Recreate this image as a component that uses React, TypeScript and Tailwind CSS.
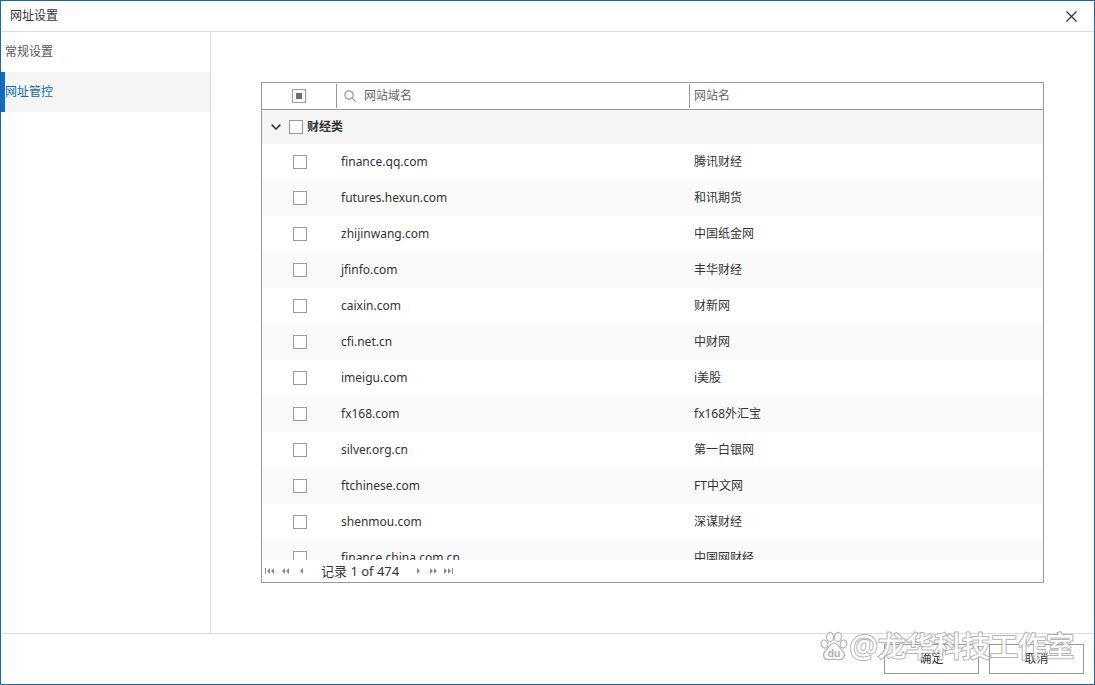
import { useState } from 'react'
import type { ComponentProps } from 'react'
import { clsx } from 'clsx'

interface Site {
  domain: string
  name:   string
}

const MENU = ['常规设置', '网址管控']

const SITES: Site[] = [
  { domain: 'finance.qq.com',       name: '腾讯财经' },
  { domain: 'futures.hexun.com',    name: '和讯期货' },
  { domain: 'zhijinwang.com',       name: '中国纸金网' },
  { domain: 'jfinfo.com',           name: '丰华财经' },
  { domain: 'caixin.com',           name: '财新网' },
  { domain: 'cfi.net.cn',           name: '中财网' },
  { domain: 'imeigu.com',           name: 'i美股' },
  { domain: 'fx168.com',            name: 'fx168外汇宝' },
  { domain: 'silver.org.cn',        name: '第一白银网' },
  { domain: 'ftchinese.com',        name: 'FT中文网' },
  { domain: 'shenmou.com',          name: '深谋财经' },
  { domain: 'finance.china.com.cn', name: '中国网财经' },
]

// Triangles and end bars of the record navigator
const ARROWS = {
  first:    'M0 0h1v6H0zM5 0v6L2 3zM9 0v6L6 3z',
  prevPage: 'M3 0v6L0 3zM7 0v6L4 3z',
  prev:     'M3 0v6L0 3z',
  next:     'M0 0v6l3-3z',
  nextPage: 'M0 0v6l3-3zM4 0v6l3-3z',
  last:     'M0 0v6l3-3zM4 0v6l3-3zM8 0h1v6H8z',
}

function PagerButton({ label, arrow }: { label: string; arrow: keyof typeof ARROWS }) {
  return (
    <button type="button" aria-label={label} className="flex h-4 w-[15px] items-center justify-center">
      <svg
        className={clsx(
          'h-[6px] fill-[#888888]',
          (arrow === 'first' || arrow === 'last') && 'w-[9px]',
          (arrow === 'prevPage' || arrow === 'nextPage') && 'w-[7px]',
          (arrow === 'prev' || arrow === 'next') && 'w-[3px]',
        )}
      >
        <path d={ARROWS[arrow]} />
      </svg>
    </button>
  )
}

function Checkbox({ mixed = false, ...props }: ComponentProps<'input'> & { mixed?: boolean }) {
  return (
    <input
      type="checkbox"
      ref={(el) => {
        if (el) el.indeterminate = mixed
      }}
      className="block h-[14px] w-[14px] shrink-0 appearance-none border border-[#999999] bg-white shadow-[inset_0_0_0_3px_#ffffff] checked:bg-[#6e6e6e] indeterminate:bg-[#6e6e6e]"
      {...props}
    />
  )
}

function Watermark() {
  return (
    <div className="pointer-events-none absolute right-5 bottom-5 flex items-center gap-px opacity-80">
      <svg viewBox="0 0 28 30" className="h-[30px] w-7 fill-white stroke-[#a0a0a0]" strokeWidth="1.200">
        <path d="M14 12c-4 0-4.500 4-7.500 6.500-3 2.500-3.500 5-2.500 7.500 1 2.500 3.500 3 6 2.500 2.500-.5 5.500-.5 8 0 2.500.5 5 0 6-2.500 1-2.500 0-5-2.500-7.500C18.500 16 18 12 14 12z" />
        <ellipse cx="4.500" cy="13" rx="3.300" ry="4" transform="rotate(-18 4.500 13)" />
        <ellipse cx="10" cy="6" rx="3.500" ry="4.600" />
        <ellipse cx="18" cy="6" rx="3.500" ry="4.600" transform="rotate(10 18 6)" />
        <ellipse cx="23.500" cy="13" rx="3.300" ry="4" transform="rotate(14 23.500 13)" />
        <text x="14" y="26" textAnchor="middle" className="fill-[#a0a0a0] stroke-none font-['Roboto',sans-serif] text-[11px] font-bold">
          du
        </text>
      </svg>
      <div className="flex items-center leading-9 font-medium text-white [-webkit-text-stroke:2px_#a0a0a0] [paint-order:stroke_fill]">
        <span className="text-[32px]">@</span>
        <span className="text-[28px]">龙华科技工作室</span>
      </div>
    </div>
  )
}

export default function App() {
  const [active, setActive] = useState('网址管控')
  const [open, setOpen] = useState(true)

  return (
    <div className="relative flex h-screen flex-col border border-[#1c66a8] bg-white font-['Noto_Sans','Noto_Sans_CJK_SC',sans-serif] text-[12px] leading-4 text-[#333333]">
      <header className="flex h-[31px] shrink-0 items-center justify-between border-b border-[#dcdcdc] pr-4 pl-[9px]">
        <h1>网址设置</h1>
        <button type="button" aria-label="关闭" className="flex h-[14px] w-[14px] items-center justify-center">
          <svg viewBox="0 0 11 11" className="h-[11px] w-[11px] stroke-[#333333]" strokeWidth="1.300">
            <path d="M.5.5l10 10M10.500.5l-10 10" />
          </svg>
        </button>
      </header>

      <div className="flex min-h-0 flex-1">
        <nav className="w-[210px] shrink-0 border-r border-[#dcdcdc]">
          {MENU.map((item) => (
            <button
              key={item}
              type="button"
              onClick={() => setActive(item)}
              className={clsx(
                'flex h-10 w-full items-center border-l-4 text-left',
                item === active
                  ? 'border-[#0a6ecb] bg-[#f5f5f5] text-[#0f6cb0]'
                  : 'border-transparent text-[#555555]',
              )}
            >
              {item}
            </button>
          ))}
        </nav>

        <main className="min-w-0 flex-1 p-[50px]">
          <div className="flex h-full flex-col border border-[#999999]">
            <div className="min-h-0 flex-1 overflow-hidden">
              <table className="w-full table-fixed border-separate border-spacing-0 text-left">
                <colgroup>
                  <col className="w-[74px]" />
                  <col className="w-[353px]" />
                  <col />
                </colgroup>
                <thead className="text-[#666666]">
                  <tr className="h-[27px]">
                    <th className="border-b border-[#999999] p-0 font-normal">
                      <div className="pl-[30px]">
                        <Checkbox mixed aria-label="全选" />
                      </div>
                    </th>
                    <th className="border-b border-[#999999] p-0 font-normal">
                      <label className="flex h-6 items-center gap-2 border-l border-[#999999] pl-[7px]">
                        <svg viewBox="0 0 12 12" className="h-3 w-3 shrink-0 fill-none stroke-[#999999]" strokeWidth="1.200">
                          <circle cx="5" cy="5" r="4.200" />
                          <path d="M8.200 8.200l3.500 3.500" />
                        </svg>
                        <input
                          type="text"
                          aria-label="网站域名"
                          placeholder="网站域名"
                          className="min-w-0 flex-1 outline-none placeholder:text-[#666666]"
                        />
                      </label>
                    </th>
                    <th className="border-b border-[#999999] p-0 font-normal">
                      <div className="flex h-6 items-center border-l border-[#999999] pl-1">网站名</div>
                    </th>
                  </tr>
                </thead>
                <tbody>
                  <tr className="h-[34px] bg-[#f5f5f5]">
                    <td colSpan={3} className="p-0">
                      <div className="flex items-center pl-[9px]">
                        <button
                          type="button"
                          aria-label="展开或收起"
                          aria-expanded={open}
                          onClick={() => setOpen(!open)}
                          className="mr-2 flex h-[10px] w-[10px] items-center"
                        >
                          <svg viewBox="0 0 10 6" className="h-[6px] w-[10px] fill-none stroke-[#333333]" strokeWidth="1.500">
                            <path d="M.6.6L5 5 9.400.6" />
                          </svg>
                        </button>
                        <label className="flex items-center gap-1 font-bold">
                          <Checkbox />
                          财经类
                        </label>
                      </div>
                    </td>
                  </tr>
                  {open &&
                    SITES.map(({ domain, name }) => (
                      <tr key={domain} className="h-9 even:bg-white odd:bg-[#fafafa]">
                        <td className="p-0">
                          <div className="pl-[31px]">
                            <Checkbox aria-label={domain} />
                          </div>
                        </td>
                        <td className="p-0 pl-[5px]">{domain}</td>
                        <td className="p-0 pl-[5px]">{name}</td>
                      </tr>
                    ))}
                </tbody>
              </table>
            </div>

            <div className="flex h-[22px] shrink-0 items-center gap-3">
              <div className="flex gap-px">
                <PagerButton label="第一条" arrow="first" />
                <PagerButton label="上一页" arrow="prevPage" />
                <PagerButton label="上一条" arrow="prev" />
              </div>
              <span className="text-[13px]">记录 1 of 474</span>
              <div className="flex">
                <PagerButton label="下一条" arrow="next" />
                <PagerButton label="下一页" arrow="nextPage" />
                <PagerButton label="最后一条" arrow="last" />
              </div>
            </div>
          </div>
        </main>
      </div>

      <footer className="flex shrink-0 justify-end gap-[10px] border-t border-[#dcdcdc] p-[10px]">
        <button type="button" className="h-[30px] w-[95px] border border-[#999999]">确定</button>
        <button type="button" className="h-[30px] w-[95px] border border-[#999999]">取消</button>
      </footer>

      <Watermark />
    </div>
  )
}
